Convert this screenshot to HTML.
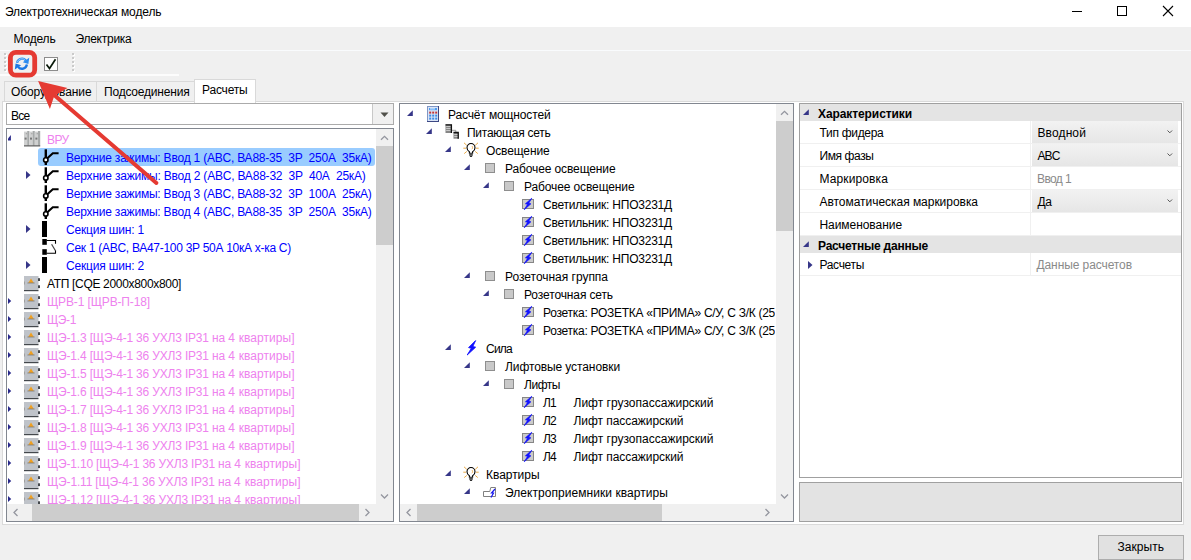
<!DOCTYPE html>
<html lang="ru"><head><meta charset="utf-8"><title>Электротехническая модель</title>
<style>
html,body{margin:0;padding:0;}
body{width:1191px;height:560px;overflow:hidden;background:#f0f0f0;position:relative;font-family:"Liberation Sans", sans-serif;font-size:12px;color:#000;}
.a{position:absolute;}
.t{position:absolute;white-space:pre;line-height:16px;height:16px;}
svg{position:absolute;overflow:visible;}
</style></head><body>
<div class="a" style="left:0px;top:0px;width:1191px;height:27px;background:#ffffff;"></div>
<span class="t" id="t0" style="left:5px;top:4px;color:#000;letter-spacing:-0.104px;">Электротехническая модель</span>
<svg style="left:1060px;top:0" width="131" height="27" viewBox="0 0 131 27"><path d="M12 11.5h10" stroke="#000" stroke-width="1" fill="none"/><rect x="57.5" y="6.5" width="9" height="9" stroke="#000" stroke-width="1" fill="none"/><path d="M103 6l10 10M113 6l-10 10" stroke="#000" stroke-width="1.1" fill="none"/></svg>
<span class="t" id="t1" style="left:13.5px;top:31px;color:#000;letter-spacing:-0.180px;">Модель</span>
<span class="t" id="t2" style="left:75.5px;top:31px;color:#000;letter-spacing:-0.262px;">Электрика</span>
<div class="a" style="left:0px;top:50px;width:1191px;height:1px;background:#f9fbfd;"></div>
<div class="a" style="left:0px;top:74px;width:179px;height:2px;background:#fcfcfc;"></div>
<svg style="left:0;top:0" width="100" height="80"><rect x="5" y="54" width="2" height="2" fill="#fff"/><rect x="4" y="53" width="2" height="2" fill="#cacaca"/><rect x="5" y="58" width="2" height="2" fill="#fff"/><rect x="4" y="57" width="2" height="2" fill="#cacaca"/><rect x="5" y="62" width="2" height="2" fill="#fff"/><rect x="4" y="61" width="2" height="2" fill="#cacaca"/><rect x="5" y="66" width="2" height="2" fill="#fff"/><rect x="4" y="65" width="2" height="2" fill="#cacaca"/><rect x="5" y="70" width="2" height="2" fill="#fff"/><rect x="4" y="69" width="2" height="2" fill="#cacaca"/></svg>
<svg style="left:0;top:0" width="100" height="80"><rect x="73" y="54" width="2" height="2" fill="#fff"/><rect x="72" y="53" width="2" height="2" fill="#cacaca"/><rect x="73" y="58" width="2" height="2" fill="#fff"/><rect x="72" y="57" width="2" height="2" fill="#cacaca"/><rect x="73" y="62" width="2" height="2" fill="#fff"/><rect x="72" y="61" width="2" height="2" fill="#cacaca"/><rect x="73" y="66" width="2" height="2" fill="#fff"/><rect x="72" y="65" width="2" height="2" fill="#cacaca"/><rect x="73" y="70" width="2" height="2" fill="#fff"/><rect x="72" y="69" width="2" height="2" fill="#cacaca"/></svg>
<svg style="left:14px;top:55.500px" width="16" height="16" viewBox="0 0 16 16"><path d="M3.080 6.830A5 5 0 0 1 11.830 4.490" stroke="#2c8cf0" stroke-width="2.300" fill="none"/><path d="M14.400 8L15.200 1.800 8.800 6.200z" fill="#2c8cf0"/><path d="M12.920 8.570A5 5 0 0 1 4.170 10.910" stroke="#1c78e4" stroke-width="2.300" fill="none"/><path d="M1.600 7.400L.800 13.600 7.200 9.200z" fill="#1c78e4"/><path d="M3.300 6.200A5 5 0 0 1 11 3.600" stroke="#a8d8ff" stroke-width=".8" fill="none"/></svg>
<svg style="left:44px;top:57px" width="14" height="14" viewBox="0 0 14 14"><rect x=".5" y=".5" width="13" height="13" fill="#fff" stroke="#8c8c8c"/><path d="M2.500 7.500L5.500 11.500 11.500 2.300" stroke="#0a1a0a" stroke-width="1.700" fill="none"/></svg>
<div class="a" style="left:2px;top:101px;width:1182px;height:424px;background:#ffffff;border:1px solid #dadada;box-sizing:border-box;"></div>
<div class="a" style="left:4px;top:81px;width:93px;height:21px;background:#f0f0f0;border:1px solid #d9d9d9;box-sizing:border-box;"></div>
<div class="a" style="left:96px;top:81px;width:99px;height:21px;background:#f0f0f0;border:1px solid #d9d9d9;box-sizing:border-box;"></div>
<div class="a" style="left:194px;top:79px;width:62px;height:24px;background:#ffffff;border:1px solid #d9d9d9;box-sizing:border-box;border-bottom:none;"></div>
<span class="t" id="t3" style="left:11px;top:84px;color:#000;letter-spacing:-0.094px;">Оборудование</span>
<span class="t" id="t4" style="left:104px;top:84px;color:#000;letter-spacing:-0.200px;">Подсоединения</span>
<span class="t" id="t5" style="left:202px;top:82px;color:#000;letter-spacing:-0.185px;">Расчеты</span>
<div class="a" style="left:6px;top:103px;width:388px;height:22px;background:#ffffff;border:1px solid #ababab;box-sizing:border-box;"></div>
<div class="a" style="left:372px;top:104px;width:20px;height:20px;background:#f0f0f0;border-left:1px solid #c8c8c8;"></div>
<svg style="left:380px;top:111.500px" width="10" height="6"><path d="M.500 .500h8L4.500 5z" fill="#50504a"/></svg>
<span class="t" id="t6" style="left:11px;top:108px;color:#000;letter-spacing:-0.729px;">Все</span>
<div class="a" style="left:6px;top:128px;width:388px;height:394px;background:#ffffff;border:1px solid #828790;box-sizing:border-box;"></div>
<div class="a" style="left:37.5px;top:148px;width:337.5px;height:18px;background:#99ccff;border-radius:3px;"></div>
<svg style="left:23.5px;top:131.2px" width="17" height="16" viewBox="0 0 17 16"><rect x="0.0" y="0.600" width="3.200" height="14" fill="#cfd0d0"/><rect x="3.2" y="0" width="2.200" height="14.600" fill="#a6a9a9"/><rect x="0.6" y="6.600" width="2" height="2" fill="#787878"/><rect x="1.8" y="2" width="1.300" height="1.300" fill="#a8a8a8"/><rect x="5.4" y="0.600" width="3.200" height="14" fill="#cfd0d0"/><rect x="8.6" y="0" width="2.200" height="14.600" fill="#a6a9a9"/><rect x="6.0" y="6.600" width="2" height="2" fill="#787878"/><rect x="7.2" y="2" width="1.300" height="1.300" fill="#a8a8a8"/><rect x="10.8" y="0.600" width="3.200" height="14" fill="#cfd0d0"/><rect x="14.0" y="0" width="2.200" height="14.600" fill="#a6a9a9"/><rect x="11.4" y="6.600" width="2" height="2" fill="#787878"/><rect x="12.6" y="2" width="1.300" height="1.300" fill="#a8a8a8"/><rect x="0" y="14.400" width="16.200" height="1" fill="#3c3c3c"/></svg>
<span class="t" id="t7" style="left:47px;top:132px;color:#ee82ee;letter-spacing:-0.625px;">ВРУ</span>
<svg style="left:8px;top:135px" width="4" height="6"><path d="M2.900 0V5.600H0V3.400z" fill="#28288a"/></svg>
<svg style="left:41px;top:149px" width="18" height="16" viewBox="0 0 18 16"><path d="M4.800 .300V16" stroke="#000" stroke-width="2.400" fill="none"/><path d="M5.800 9.800L11.800 4.300H17.600" stroke="#000" stroke-width="2.100" fill="none"/><circle cx="4.800" cy="10.900" r="2.200" fill="#fff" stroke="#000" stroke-width="1.600"/></svg>
<span class="t" id="t8" style="left:66px;top:150px;color:#0000ff;letter-spacing:-0.212px;">Верхние зажимы: Ввод 1 (ABC, ВА88-35  3P  250А  35кА)</span>
<svg style="left:26px;top:171px" width="5" height="8"><path d="M0 0L4.500 4 0 8z" fill="#363688"/></svg>
<svg style="left:41px;top:167px" width="18" height="16" viewBox="0 0 18 16"><path d="M4.800 .300V16" stroke="#000" stroke-width="2.400" fill="none"/><path d="M5.800 9.800L11.800 4.300H17.600" stroke="#000" stroke-width="2.100" fill="none"/><circle cx="4.800" cy="10.900" r="2.200" fill="#fff" stroke="#000" stroke-width="1.600"/></svg>
<span class="t" id="t9" style="left:66px;top:168px;color:#0000ff;letter-spacing:-0.203px;">Верхние зажимы: Ввод 2 (ABC, ВА88-32  3P  40А  25кА)</span>
<svg style="left:41px;top:185px" width="18" height="16" viewBox="0 0 18 16"><path d="M4.800 .300V16" stroke="#000" stroke-width="2.400" fill="none"/><path d="M5.800 9.800L11.800 4.300H17.600" stroke="#000" stroke-width="2.100" fill="none"/><circle cx="4.800" cy="10.900" r="2.200" fill="#fff" stroke="#000" stroke-width="1.600"/></svg>
<span class="t" id="t10" style="left:66px;top:186px;color:#0000ff;letter-spacing:-0.212px;">Верхние зажимы: Ввод 3 (ABC, ВА88-32  3P  100А  25кА)</span>
<svg style="left:41px;top:203px" width="18" height="16" viewBox="0 0 18 16"><path d="M4.800 .300V16" stroke="#000" stroke-width="2.400" fill="none"/><path d="M5.800 9.800L11.800 4.300H17.600" stroke="#000" stroke-width="2.100" fill="none"/><circle cx="4.800" cy="10.900" r="2.200" fill="#fff" stroke="#000" stroke-width="1.600"/></svg>
<span class="t" id="t11" style="left:66px;top:204px;color:#0000ff;letter-spacing:-0.212px;">Верхние зажимы: Ввод 4 (ABC, ВА88-35  3P  250А  35кА)</span>
<svg style="left:26px;top:225px" width="5" height="8"><path d="M0 0L4.500 4 0 8z" fill="#363688"/></svg>
<div class="a" style="left:42.3px;top:221px;width:4.500px;height:16px;background:#000"></div>
<span class="t" id="t12" style="left:66px;top:222px;color:#0000ff;letter-spacing:-0.177px;">Секция шин: 1</span>
<svg style="left:42px;top:238px" width="16" height="18" viewBox="0 0 16 18"><rect x=".3" y="1" width="4.500" height="5.800" fill="#000"/><rect x=".3" y="11.200" width="4.500" height="5.600" fill="#000"/><path d="M4.500 2.500H13.500V5.800M13.500 12.300V15.300H4.500" stroke="#000" stroke-width="1.100" fill="none"/><path d="M9.600 6.200L13.300 12.500" stroke="#444" stroke-width="1.200" fill="none"/></svg>
<span class="t" id="t13" style="left:66px;top:240px;color:#0000ff;letter-spacing:-0.280px;">Сек 1 (ABC, ВА47-100 3P 50А 10кА х-ка C)</span>
<svg style="left:26px;top:261px" width="5" height="8"><path d="M0 0L4.500 4 0 8z" fill="#363688"/></svg>
<div class="a" style="left:42.3px;top:257px;width:4.500px;height:16px;background:#000"></div>
<span class="t" id="t14" style="left:66px;top:258px;color:#0000ff;letter-spacing:-0.177px;">Секция шин: 2</span>
<svg style="left:23.6px;top:276px" width="17" height="16" viewBox="0 0 17 16"><rect x="0" y="0" width="14.500" height="14" fill="#bfc3c9"/><rect x="0" y="14" width="14.500" height="1.200" fill="#44484c"/><rect x="14" y="2.200" width="2" height="2.800" fill="#44484c"/><rect x="14" y="9.300" width="2" height="2.800" fill="#44484c"/><rect x="0" y="5.500" width="1" height="3" fill="#a0a0a0"/><path d="M4.200 6.900L7 2.500 9.800 6.900z" fill="#f0a020"/><path d="M3.400 7h7.200" stroke="#7a7a7a" stroke-width=".8"/></svg>
<span class="t" id="t15" style="left:47px;top:276px;color:#000;letter-spacing:-0.323px;">АТП [CQE 2000x800x800]</span>
<svg style="left:8px;top:298px" width="4" height="6"><path d="M0 0L3.200 3 0 6z" fill="#28288a"/></svg>
<svg style="left:23.6px;top:294px" width="17" height="16" viewBox="0 0 17 16"><rect x="0" y="0" width="14.500" height="14" fill="#bfc3c9"/><rect x="0" y="14" width="14.500" height="1.200" fill="#44484c"/><rect x="14" y="2.200" width="2" height="2.800" fill="#44484c"/><rect x="14" y="9.300" width="2" height="2.800" fill="#44484c"/><rect x="0" y="5.500" width="1" height="3" fill="#a0a0a0"/><path d="M4.200 6.900L7 2.500 9.800 6.900z" fill="#f0a020"/><path d="M3.400 7h7.200" stroke="#7a7a7a" stroke-width=".8"/></svg>
<span class="t" id="t16" style="left:47px;top:294px;color:#ee82ee;letter-spacing:-0.135px;">ЩРВ-1 [ЩРВ-П-18]</span>
<svg style="left:8px;top:316px" width="4" height="6"><path d="M0 0L3.200 3 0 6z" fill="#28288a"/></svg>
<svg style="left:23.6px;top:312px" width="17" height="16" viewBox="0 0 17 16"><rect x="0" y="0" width="14.500" height="14" fill="#bfc3c9"/><rect x="0" y="14" width="14.500" height="1.200" fill="#44484c"/><rect x="14" y="2.200" width="2" height="2.800" fill="#44484c"/><rect x="14" y="9.300" width="2" height="2.800" fill="#44484c"/><rect x="0" y="5.500" width="1" height="3" fill="#a0a0a0"/><path d="M4.200 6.900L7 2.500 9.800 6.900z" fill="#f0a020"/><path d="M3.400 7h7.200" stroke="#7a7a7a" stroke-width=".8"/></svg>
<span class="t" id="t17" style="left:47px;top:312px;color:#ee82ee;letter-spacing:-0.387px;">ЩЭ-1</span>
<svg style="left:8px;top:334px" width="4" height="6"><path d="M0 0L3.200 3 0 6z" fill="#28288a"/></svg>
<svg style="left:23.6px;top:330px" width="17" height="16" viewBox="0 0 17 16"><rect x="0" y="0" width="14.500" height="14" fill="#bfc3c9"/><rect x="0" y="14" width="14.500" height="1.200" fill="#44484c"/><rect x="14" y="2.200" width="2" height="2.800" fill="#44484c"/><rect x="14" y="9.300" width="2" height="2.800" fill="#44484c"/><rect x="0" y="5.500" width="1" height="3" fill="#a0a0a0"/><path d="M4.200 6.900L7 2.500 9.800 6.900z" fill="#f0a020"/><path d="M3.400 7h7.200" stroke="#7a7a7a" stroke-width=".8"/></svg>
<span class="t" id="t18" style="left:47px;top:330px;color:#ee82ee;letter-spacing:-0.177px;">ЩЭ-1.3 [ЩЭ-4-1 36 УХЛ3 IP31 на 4 </span>
<span class="t" id="t19" style="left:238.8px;top:330px;color:#ee82ee;letter-spacing:0.033px;">квартиры]</span>
<svg style="left:8px;top:352px" width="4" height="6"><path d="M0 0L3.200 3 0 6z" fill="#28288a"/></svg>
<svg style="left:23.6px;top:348px" width="17" height="16" viewBox="0 0 17 16"><rect x="0" y="0" width="14.500" height="14" fill="#bfc3c9"/><rect x="0" y="14" width="14.500" height="1.200" fill="#44484c"/><rect x="14" y="2.200" width="2" height="2.800" fill="#44484c"/><rect x="14" y="9.300" width="2" height="2.800" fill="#44484c"/><rect x="0" y="5.500" width="1" height="3" fill="#a0a0a0"/><path d="M4.200 6.900L7 2.500 9.800 6.900z" fill="#f0a020"/><path d="M3.400 7h7.200" stroke="#7a7a7a" stroke-width=".8"/></svg>
<span class="t" id="t20" style="left:47px;top:348px;color:#ee82ee;letter-spacing:-0.177px;">ЩЭ-1.4 [ЩЭ-4-1 36 УХЛ3 IP31 на 4 </span>
<span class="t" id="t21" style="left:238.8px;top:348px;color:#ee82ee;letter-spacing:0.033px;">квартиры]</span>
<svg style="left:8px;top:370px" width="4" height="6"><path d="M0 0L3.200 3 0 6z" fill="#28288a"/></svg>
<svg style="left:23.6px;top:366px" width="17" height="16" viewBox="0 0 17 16"><rect x="0" y="0" width="14.500" height="14" fill="#bfc3c9"/><rect x="0" y="14" width="14.500" height="1.200" fill="#44484c"/><rect x="14" y="2.200" width="2" height="2.800" fill="#44484c"/><rect x="14" y="9.300" width="2" height="2.800" fill="#44484c"/><rect x="0" y="5.500" width="1" height="3" fill="#a0a0a0"/><path d="M4.200 6.900L7 2.500 9.800 6.900z" fill="#f0a020"/><path d="M3.400 7h7.200" stroke="#7a7a7a" stroke-width=".8"/></svg>
<span class="t" id="t22" style="left:47px;top:366px;color:#ee82ee;letter-spacing:-0.177px;">ЩЭ-1.5 [ЩЭ-4-1 36 УХЛ3 IP31 на 4 </span>
<span class="t" id="t23" style="left:238.8px;top:366px;color:#ee82ee;letter-spacing:0.033px;">квартиры]</span>
<svg style="left:8px;top:388px" width="4" height="6"><path d="M0 0L3.200 3 0 6z" fill="#28288a"/></svg>
<svg style="left:23.6px;top:384px" width="17" height="16" viewBox="0 0 17 16"><rect x="0" y="0" width="14.500" height="14" fill="#bfc3c9"/><rect x="0" y="14" width="14.500" height="1.200" fill="#44484c"/><rect x="14" y="2.200" width="2" height="2.800" fill="#44484c"/><rect x="14" y="9.300" width="2" height="2.800" fill="#44484c"/><rect x="0" y="5.500" width="1" height="3" fill="#a0a0a0"/><path d="M4.200 6.900L7 2.500 9.800 6.900z" fill="#f0a020"/><path d="M3.400 7h7.200" stroke="#7a7a7a" stroke-width=".8"/></svg>
<span class="t" id="t24" style="left:47px;top:384px;color:#ee82ee;letter-spacing:-0.177px;">ЩЭ-1.6 [ЩЭ-4-1 36 УХЛ3 IP31 на 4 </span>
<span class="t" id="t25" style="left:238.8px;top:384px;color:#ee82ee;letter-spacing:0.033px;">квартиры]</span>
<svg style="left:8px;top:406px" width="4" height="6"><path d="M0 0L3.200 3 0 6z" fill="#28288a"/></svg>
<svg style="left:23.6px;top:402px" width="17" height="16" viewBox="0 0 17 16"><rect x="0" y="0" width="14.500" height="14" fill="#bfc3c9"/><rect x="0" y="14" width="14.500" height="1.200" fill="#44484c"/><rect x="14" y="2.200" width="2" height="2.800" fill="#44484c"/><rect x="14" y="9.300" width="2" height="2.800" fill="#44484c"/><rect x="0" y="5.500" width="1" height="3" fill="#a0a0a0"/><path d="M4.200 6.900L7 2.500 9.800 6.900z" fill="#f0a020"/><path d="M3.400 7h7.200" stroke="#7a7a7a" stroke-width=".8"/></svg>
<span class="t" id="t26" style="left:47px;top:402px;color:#ee82ee;letter-spacing:-0.177px;">ЩЭ-1.7 [ЩЭ-4-1 36 УХЛ3 IP31 на 4 </span>
<span class="t" id="t27" style="left:238.8px;top:402px;color:#ee82ee;letter-spacing:0.033px;">квартиры]</span>
<svg style="left:8px;top:424px" width="4" height="6"><path d="M0 0L3.200 3 0 6z" fill="#28288a"/></svg>
<svg style="left:23.6px;top:420px" width="17" height="16" viewBox="0 0 17 16"><rect x="0" y="0" width="14.500" height="14" fill="#bfc3c9"/><rect x="0" y="14" width="14.500" height="1.200" fill="#44484c"/><rect x="14" y="2.200" width="2" height="2.800" fill="#44484c"/><rect x="14" y="9.300" width="2" height="2.800" fill="#44484c"/><rect x="0" y="5.500" width="1" height="3" fill="#a0a0a0"/><path d="M4.200 6.900L7 2.500 9.800 6.900z" fill="#f0a020"/><path d="M3.400 7h7.200" stroke="#7a7a7a" stroke-width=".8"/></svg>
<span class="t" id="t28" style="left:47px;top:420px;color:#ee82ee;letter-spacing:-0.177px;">ЩЭ-1.8 [ЩЭ-4-1 36 УХЛ3 IP31 на 4 </span>
<span class="t" id="t29" style="left:238.8px;top:420px;color:#ee82ee;letter-spacing:0.033px;">квартиры]</span>
<svg style="left:8px;top:442px" width="4" height="6"><path d="M0 0L3.200 3 0 6z" fill="#28288a"/></svg>
<svg style="left:23.6px;top:438px" width="17" height="16" viewBox="0 0 17 16"><rect x="0" y="0" width="14.500" height="14" fill="#bfc3c9"/><rect x="0" y="14" width="14.500" height="1.200" fill="#44484c"/><rect x="14" y="2.200" width="2" height="2.800" fill="#44484c"/><rect x="14" y="9.300" width="2" height="2.800" fill="#44484c"/><rect x="0" y="5.500" width="1" height="3" fill="#a0a0a0"/><path d="M4.200 6.900L7 2.500 9.800 6.900z" fill="#f0a020"/><path d="M3.400 7h7.200" stroke="#7a7a7a" stroke-width=".8"/></svg>
<span class="t" id="t30" style="left:47px;top:438px;color:#ee82ee;letter-spacing:-0.177px;">ЩЭ-1.9 [ЩЭ-4-1 36 УХЛ3 IP31 на 4 </span>
<span class="t" id="t31" style="left:238.8px;top:438px;color:#ee82ee;letter-spacing:0.033px;">квартиры]</span>
<svg style="left:8px;top:460px" width="4" height="6"><path d="M0 0L3.200 3 0 6z" fill="#28288a"/></svg>
<svg style="left:23.6px;top:456px" width="17" height="16" viewBox="0 0 17 16"><rect x="0" y="0" width="14.500" height="14" fill="#bfc3c9"/><rect x="0" y="14" width="14.500" height="1.200" fill="#44484c"/><rect x="14" y="2.200" width="2" height="2.800" fill="#44484c"/><rect x="14" y="9.300" width="2" height="2.800" fill="#44484c"/><rect x="0" y="5.500" width="1" height="3" fill="#a0a0a0"/><path d="M4.200 6.900L7 2.500 9.800 6.900z" fill="#f0a020"/><path d="M3.400 7h7.200" stroke="#7a7a7a" stroke-width=".8"/></svg>
<span class="t" id="t32" style="left:47px;top:456px;color:#ee82ee;letter-spacing:-0.191px;">ЩЭ-1.10 [ЩЭ-4-1 36 УХЛ3 IP31 на 4 </span>
<span class="t" id="t33" style="left:244.8px;top:456px;color:#ee82ee;letter-spacing:0.033px;">квартиры]</span>
<svg style="left:8px;top:478px" width="4" height="6"><path d="M0 0L3.200 3 0 6z" fill="#28288a"/></svg>
<svg style="left:23.6px;top:474px" width="17" height="16" viewBox="0 0 17 16"><rect x="0" y="0" width="14.500" height="14" fill="#bfc3c9"/><rect x="0" y="14" width="14.500" height="1.200" fill="#44484c"/><rect x="14" y="2.200" width="2" height="2.800" fill="#44484c"/><rect x="14" y="9.300" width="2" height="2.800" fill="#44484c"/><rect x="0" y="5.500" width="1" height="3" fill="#a0a0a0"/><path d="M4.200 6.900L7 2.500 9.800 6.900z" fill="#f0a020"/><path d="M3.400 7h7.200" stroke="#7a7a7a" stroke-width=".8"/></svg>
<span class="t" id="t34" style="left:47px;top:474px;color:#ee82ee;letter-spacing:-0.165px;">ЩЭ-1.11 [ЩЭ-4-1 36 УХЛ3 IP31 на 4 </span>
<span class="t" id="t35" style="left:244.8px;top:474px;color:#ee82ee;letter-spacing:0.033px;">квартиры]</span>
<svg style="left:8px;top:496px" width="4" height="6"><path d="M0 0L3.200 3 0 6z" fill="#28288a"/></svg>
<svg style="left:23.6px;top:492px" width="17" height="16" viewBox="0 0 17 16"><rect x="0" y="0" width="14.500" height="14" fill="#bfc3c9"/><rect x="0" y="14" width="14.500" height="1.200" fill="#44484c"/><rect x="14" y="2.200" width="2" height="2.800" fill="#44484c"/><rect x="14" y="9.300" width="2" height="2.800" fill="#44484c"/><rect x="0" y="5.500" width="1" height="3" fill="#a0a0a0"/><path d="M4.200 6.900L7 2.500 9.800 6.900z" fill="#f0a020"/><path d="M3.400 7h7.200" stroke="#7a7a7a" stroke-width=".8"/></svg>
<span class="t" id="t36" style="left:47px;top:492px;color:#ee82ee;letter-spacing:-0.191px;">ЩЭ-1.12 [ЩЭ-4-1 36 УХЛ3 IP31 на 4 </span>
<span class="t" id="t37" style="left:244.8px;top:492px;color:#ee82ee;letter-spacing:0.033px;">квартиры]</span>
<div class="a" style="left:7px;top:504px;width:369px;height:17px;background:#f0f0f0;"></div>
<div class="a" style="left:32px;top:504px;width:327px;height:17px;background:#cdcdcd;"></div>
<svg style="left:7px;top:504px" width="369" height="17"><path d="M10.500 5l-3.500 3.500 3.500 3.500" stroke="#94969f" stroke-width="1.300" fill="none"/><path d="M358.5 5l3.500 3.500-3.500 3.500" stroke="#94969f" stroke-width="1.300" fill="none"/></svg>
<div class="a" style="left:376px;top:129px;width:17px;height:375px;background:#f0f0f0;"></div>
<div class="a" style="left:376px;top:146px;width:17px;height:99px;background:#cdcdcd;"></div>
<svg style="left:376px;top:129px" width="17" height="375"><path d="M5 10.800l3.500-3.500 3.500 3.500" stroke="#94969f" stroke-width="1.300" fill="none"/><path d="M5 365.5l3.500 3.500 3.500-3.500" stroke="#94969f" stroke-width="1.300" fill="none"/></svg>
<div class="a" style="left:376px;top:504px;width:17px;height:17px;background:#f0f0f0;"></div>
<div class="a" style="left:399px;top:103px;width:395px;height:419px;background:#ffffff;border:1px solid #828790;box-sizing:border-box;"></div>
<svg style="left:406.6px;top:109.6px" width="6" height="6"><path d="M5.800 .200V6H0z" fill="#363688"/></svg>
<svg style="left:427px;top:106px" width="13" height="16" viewBox="0 0 13 16"><rect x="0" y="0" width="12" height="16" fill="#3c4884"/><rect x="0" y="0" width="11" height="15" fill="#7f96c6"/><rect x="1" y="1" width="10" height="14" fill="#dbe5f6"/><rect x="2" y="2" width="8" height="2.200" fill="#4f9cf0"/><rect x="3" y="2.400" width="5" height="1" fill="#e8f4ff"/><rect x="2.2" y="5.6" width="2" height="2" fill="#c23838"/><rect x="5.2" y="5.6" width="2" height="2" fill="#c23838"/><rect x="8.2" y="5.6" width="2" height="2" fill="#c23838"/><rect x="2.2" y="8.6" width="2" height="2" fill="#3c8ce4"/><rect x="5.2" y="8.6" width="2" height="2" fill="#3c8ce4"/><rect x="8.2" y="8.6" width="2" height="2" fill="#3c8ce4"/><rect x="2.2" y="11.6" width="2" height="2" fill="#3c8ce4"/><rect x="5.2" y="11.6" width="2" height="2" fill="#3c8ce4"/><rect x="8.2" y="11.6" width="2" height="2" fill="#3c8ce4"/></svg>
<span class="t" id="t38" style="left:448px;top:107px;color:#000;letter-spacing:-0.141px;">Расчёт мощностей</span>
<svg style="left:425.6px;top:127.6px" width="6" height="6"><path d="M5.800 .200V6H0z" fill="#363688"/></svg>
<svg style="left:444.5px;top:124px" width="15" height="16" viewBox="0 0 15 16"><rect x=".5" y=".5" width="6.400" height="8.500" fill="#868686"/><path d="M.500 .800H6.400V9" stroke="#111" stroke-width="1.300" fill="none"/><path d="M1.200 2.500h4.200M1.200 4.500h4.200M1.200 6.500h4.200" stroke="#cfcfcf" stroke-width=".9"/><path d="M7 6.300h3.800V8" stroke="#9a9a9a" stroke-width="1" fill="none"/><rect x="8.500" y="8.200" width="5.200" height="6.500" fill="#868686"/><path d="M8.500 8.500H13.200V14.700" stroke="#111" stroke-width="1.300" fill="none"/><path d="M9.200 10.500h3.200M9.200 12.500h3.200" stroke="#cfcfcf" stroke-width=".9"/></svg>
<span class="t" id="t39" style="left:467px;top:125px;color:#000;letter-spacing:-0.251px;">Питающая сеть</span>
<svg style="left:444.6px;top:145.6px" width="6" height="6"><path d="M5.800 .200V6H0z" fill="#363688"/></svg>
<svg style="left:463px;top:142px" width="16" height="16" viewBox="0 0 16 16"><path d="M1 .800l2.800 2.600M15 .800l-2.800 2.600M.300 6.200h2.700M15.700 6.200h-2.700M1.200 11.600l2.600-2.200M14.800 11.600l-2.600-2.200" stroke="#e8a030" stroke-width=".9" fill="none"/><path d="M6.400 11.200V9.800C5 9 4 7.600 4 5.800 4 3.400 5.700 1.500 8 1.500s4 1.900 4 4.300c0 1.800-1 3.200-2.400 4v1.400z" fill="#fff" stroke="#000" stroke-width="1.100"/><path d="M8.800 4c1 .6 1 2.600 0 3.200" stroke="#e8a030" stroke-width=".8" fill="none"/><rect x="6.200" y="11.200" width="3.600" height="2.600" fill="#505050"/><rect x="6.900" y="13.800" width="2.200" height="1.200" fill="#303030"/></svg>
<span class="t" id="t40" style="left:486px;top:143px;color:#000;letter-spacing:-0.130px;">Освещение</span>
<svg style="left:463.6px;top:163.6px" width="6" height="6"><path d="M5.800 .200V6H0z" fill="#363688"/></svg>
<div class="a" style="left:485px;top:163px;width:10px;height:10px;box-sizing:border-box;background:#c9c9c9;border:1px solid #8e8e8e"></div>
<span class="t" id="t41" style="left:505px;top:161px;color:#000;letter-spacing:-0.118px;">Рабочее освещение</span>
<svg style="left:482.6px;top:181.6px" width="6" height="6"><path d="M5.800 .200V6H0z" fill="#363688"/></svg>
<div class="a" style="left:504px;top:181px;width:10px;height:10px;box-sizing:border-box;background:#c9c9c9;border:1px solid #8e8e8e"></div>
<span class="t" id="t42" style="left:524px;top:179px;color:#000;letter-spacing:-0.118px;">Рабочее освещение</span>
<svg style="left:522px;top:197px" width="13" height="14" viewBox="0 0 13 14"><rect x=".5" y="2.500" width="11" height="9" fill="#cbcbcb" stroke="#868686"/><path d="M9.800 1.200L3.400 6.800 5.600 7.300 2.200 12.800 8.900 6.800 6.700 6.300z" fill="#1010ff" stroke="#1010ff" stroke-width=".7" stroke-linejoin="round"/></svg>
<span class="t" id="t43" style="left:543px;top:197px;color:#000;letter-spacing:-0.217px;">Светильник: НПО3231Д</span>
<svg style="left:522px;top:215px" width="13" height="14" viewBox="0 0 13 14"><rect x=".5" y="2.500" width="11" height="9" fill="#cbcbcb" stroke="#868686"/><path d="M9.800 1.200L3.400 6.800 5.600 7.300 2.200 12.800 8.900 6.800 6.700 6.300z" fill="#1010ff" stroke="#1010ff" stroke-width=".7" stroke-linejoin="round"/></svg>
<span class="t" id="t44" style="left:543px;top:215px;color:#000;letter-spacing:-0.217px;">Светильник: НПО3231Д</span>
<svg style="left:522px;top:233px" width="13" height="14" viewBox="0 0 13 14"><rect x=".5" y="2.500" width="11" height="9" fill="#cbcbcb" stroke="#868686"/><path d="M9.800 1.200L3.400 6.800 5.600 7.300 2.200 12.800 8.900 6.800 6.700 6.300z" fill="#1010ff" stroke="#1010ff" stroke-width=".7" stroke-linejoin="round"/></svg>
<span class="t" id="t45" style="left:543px;top:233px;color:#000;letter-spacing:-0.217px;">Светильник: НПО3231Д</span>
<svg style="left:522px;top:251px" width="13" height="14" viewBox="0 0 13 14"><rect x=".5" y="2.500" width="11" height="9" fill="#cbcbcb" stroke="#868686"/><path d="M9.800 1.200L3.400 6.800 5.600 7.300 2.200 12.800 8.900 6.800 6.700 6.300z" fill="#1010ff" stroke="#1010ff" stroke-width=".7" stroke-linejoin="round"/></svg>
<span class="t" id="t46" style="left:543px;top:251px;color:#000;letter-spacing:-0.217px;">Светильник: НПО3231Д</span>
<svg style="left:463.6px;top:271.6px" width="6" height="6"><path d="M5.800 .200V6H0z" fill="#363688"/></svg>
<div class="a" style="left:485px;top:271px;width:10px;height:10px;box-sizing:border-box;background:#c9c9c9;border:1px solid #8e8e8e"></div>
<span class="t" id="t47" style="left:505px;top:269px;color:#000;letter-spacing:-0.024px;">Розеточная группа</span>
<svg style="left:482.6px;top:289.6px" width="6" height="6"><path d="M5.800 .200V6H0z" fill="#363688"/></svg>
<div class="a" style="left:504px;top:289px;width:10px;height:10px;box-sizing:border-box;background:#c9c9c9;border:1px solid #8e8e8e"></div>
<span class="t" id="t48" style="left:524px;top:287px;color:#000;letter-spacing:-0.123px;">Розеточная сеть</span>
<svg style="left:522px;top:305px" width="13" height="14" viewBox="0 0 13 14"><rect x=".5" y="2.500" width="11" height="9" fill="#cbcbcb" stroke="#868686"/><path d="M9.800 1.200L3.400 6.800 5.600 7.300 2.200 12.800 8.900 6.800 6.700 6.300z" fill="#1010ff" stroke="#1010ff" stroke-width=".7" stroke-linejoin="round"/></svg>
<span class="t" id="t49" style="left:543px;top:305px;color:#000;letter-spacing:-0.280px;width:232px;overflow:hidden;">Розетка: РОЗЕТКА «ПРИМА» С/У, С З/К (25</span>
<svg style="left:522px;top:323px" width="13" height="14" viewBox="0 0 13 14"><rect x=".5" y="2.500" width="11" height="9" fill="#cbcbcb" stroke="#868686"/><path d="M9.800 1.200L3.400 6.800 5.600 7.300 2.200 12.800 8.900 6.800 6.700 6.300z" fill="#1010ff" stroke="#1010ff" stroke-width=".7" stroke-linejoin="round"/></svg>
<span class="t" id="t50" style="left:543px;top:323px;color:#000;letter-spacing:-0.280px;width:232px;overflow:hidden;">Розетка: РОЗЕТКА «ПРИМА» С/У, С З/К (25</span>
<svg style="left:444.6px;top:343.6px" width="6" height="6"><path d="M5.800 .200V6H0z" fill="#363688"/></svg>
<svg style="left:466px;top:340px" width="11" height="16" viewBox="0 0 11 16"><path d="M9.600 .6L2.600 7.600 5.400 8.300 1.200 15 9.600 7.200 6.800 6.500z" fill="#1010ff" stroke="#1010ff" stroke-width=".9" stroke-linejoin="round"/></svg>
<span class="t" id="t51" style="left:486px;top:341px;color:#000;letter-spacing:-0.762px;">Сила</span>
<svg style="left:463.6px;top:361.6px" width="6" height="6"><path d="M5.800 .200V6H0z" fill="#363688"/></svg>
<div class="a" style="left:485px;top:361px;width:10px;height:10px;box-sizing:border-box;background:#c9c9c9;border:1px solid #8e8e8e"></div>
<span class="t" id="t52" style="left:505px;top:359px;color:#000;letter-spacing:-0.098px;">Лифтовые установки</span>
<svg style="left:482.6px;top:379.6px" width="6" height="6"><path d="M5.800 .200V6H0z" fill="#363688"/></svg>
<div class="a" style="left:504px;top:379px;width:10px;height:10px;box-sizing:border-box;background:#c9c9c9;border:1px solid #8e8e8e"></div>
<span class="t" id="t53" style="left:524px;top:377px;color:#000;letter-spacing:-0.463px;">Лифты</span>
<svg style="left:522px;top:395px" width="13" height="14" viewBox="0 0 13 14"><rect x=".5" y="2.500" width="11" height="9" fill="#cbcbcb" stroke="#868686"/><path d="M9.800 1.200L3.400 6.800 5.600 7.300 2.200 12.800 8.900 6.800 6.700 6.300z" fill="#1010ff" stroke="#1010ff" stroke-width=".7" stroke-linejoin="round"/></svg>
<span class="t" id="t54" style="left:543px;top:395px;color:#000;letter-spacing:-0.781px;">Л1</span>
<span class="t" id="t55" style="left:573.5px;top:395px;color:#000;letter-spacing:0.005px;">Лифт грузопассажирский</span>
<svg style="left:522px;top:413px" width="13" height="14" viewBox="0 0 13 14"><rect x=".5" y="2.500" width="11" height="9" fill="#cbcbcb" stroke="#868686"/><path d="M9.800 1.200L3.400 6.800 5.600 7.300 2.200 12.800 8.900 6.800 6.700 6.300z" fill="#1010ff" stroke="#1010ff" stroke-width=".7" stroke-linejoin="round"/></svg>
<span class="t" id="t56" style="left:543px;top:413px;color:#000;letter-spacing:-0.781px;">Л2</span>
<span class="t" id="t57" style="left:573.5px;top:413px;color:#000;letter-spacing:-0.055px;">Лифт пассажирский</span>
<svg style="left:522px;top:431px" width="13" height="14" viewBox="0 0 13 14"><rect x=".5" y="2.500" width="11" height="9" fill="#cbcbcb" stroke="#868686"/><path d="M9.800 1.200L3.400 6.800 5.600 7.300 2.200 12.800 8.900 6.800 6.700 6.300z" fill="#1010ff" stroke="#1010ff" stroke-width=".7" stroke-linejoin="round"/></svg>
<span class="t" id="t58" style="left:543px;top:431px;color:#000;letter-spacing:-0.781px;">Л3</span>
<span class="t" id="t59" style="left:573.5px;top:431px;color:#000;letter-spacing:0.005px;">Лифт грузопассажирский</span>
<svg style="left:522px;top:449px" width="13" height="14" viewBox="0 0 13 14"><rect x=".5" y="2.500" width="11" height="9" fill="#cbcbcb" stroke="#868686"/><path d="M9.800 1.200L3.400 6.800 5.600 7.300 2.200 12.800 8.900 6.800 6.700 6.300z" fill="#1010ff" stroke="#1010ff" stroke-width=".7" stroke-linejoin="round"/></svg>
<span class="t" id="t60" style="left:543px;top:449px;color:#000;letter-spacing:-0.781px;">Л4</span>
<span class="t" id="t61" style="left:573.5px;top:449px;color:#000;letter-spacing:-0.055px;">Лифт пассажирский</span>
<svg style="left:444.6px;top:469.6px" width="6" height="6"><path d="M5.800 .200V6H0z" fill="#363688"/></svg>
<svg style="left:463px;top:466px" width="16" height="16" viewBox="0 0 16 16"><path d="M1 .800l2.800 2.600M15 .800l-2.800 2.600M.300 6.200h2.700M15.700 6.200h-2.700M1.200 11.600l2.600-2.200M14.800 11.600l-2.600-2.200" stroke="#e8a030" stroke-width=".9" fill="none"/><path d="M6.400 11.200V9.800C5 9 4 7.600 4 5.800 4 3.400 5.700 1.500 8 1.500s4 1.900 4 4.300c0 1.800-1 3.200-2.400 4v1.400z" fill="#fff" stroke="#000" stroke-width="1.100"/><path d="M8.800 4c1 .6 1 2.600 0 3.200" stroke="#e8a030" stroke-width=".8" fill="none"/><rect x="6.200" y="11.200" width="3.600" height="2.600" fill="#505050"/><rect x="6.900" y="13.800" width="2.200" height="1.200" fill="#303030"/></svg>
<span class="t" id="t62" style="left:486px;top:467px;color:#000;letter-spacing:-0.039px;">Квартиры</span>
<svg style="left:463.6px;top:487.6px" width="6" height="6"><path d="M5.800 .200V6H0z" fill="#363688"/></svg>
<svg style="left:483px;top:486px" width="14" height="12" viewBox="0 0 14 12"><path d="M.500 5.500H6.800L7.800 1.500H12.500V10.500H.500z" fill="#fff" stroke="#808080" stroke-width="1"/><path d="M12 3L8.500 7H10.500L8 11.500" stroke="#1616f0" stroke-width="1.200" fill="none"/></svg>
<span class="t" id="t63" style="left:505px;top:485px;color:#000;letter-spacing:0.055px;">Электроприемники квартиры</span>
<div class="a" style="left:400px;top:504px;width:376px;height:17px;background:#f0f0f0;"></div>
<div class="a" style="left:417px;top:504px;width:245px;height:17px;background:#cdcdcd;"></div>
<svg style="left:400px;top:504px" width="376" height="17"><path d="M10.500 5l-3.500 3.500 3.500 3.500" stroke="#94969f" stroke-width="1.300" fill="none"/><path d="M365.5 5l3.500 3.500-3.500 3.500" stroke="#94969f" stroke-width="1.300" fill="none"/></svg>
<div class="a" style="left:776px;top:104px;width:17px;height:400px;background:#f0f0f0;"></div>
<div class="a" style="left:776px;top:121px;width:17px;height:110px;background:#cdcdcd;"></div>
<svg style="left:776px;top:104px" width="17" height="400"><path d="M5 10.800l3.500-3.500 3.500 3.500" stroke="#94969f" stroke-width="1.300" fill="none"/><path d="M5 390.5l3.500 3.500 3.500-3.500" stroke="#94969f" stroke-width="1.300" fill="none"/></svg>
<div class="a" style="left:776px;top:504px;width:17px;height:17px;background:#f0f0f0;"></div>
<div class="a" style="left:799px;top:103px;width:383px;height:375px;background:#ffffff;border:1px solid #a0a0a0;box-sizing:border-box;"></div>
<div class="a" style="left:800px;top:104px;width:381px;height:17px;background:#e4e4e4;"></div>
<div class="a" style="left:800px;top:236px;width:381px;height:17px;background:#e4e4e4;"></div>
<div class="a" style="left:800px;top:143px;width:381px;height:1px;background:#f0f0f0;"></div>
<div class="a" style="left:800px;top:166px;width:381px;height:1px;background:#f0f0f0;"></div>
<div class="a" style="left:800px;top:189px;width:381px;height:1px;background:#f0f0f0;"></div>
<div class="a" style="left:800px;top:212px;width:381px;height:1px;background:#f0f0f0;"></div>
<div class="a" style="left:800px;top:235px;width:381px;height:1px;background:#f0f0f0;"></div>
<div class="a" style="left:800px;top:275px;width:381px;height:1px;background:#f0f0f0;"></div>
<div class="a" style="left:1030px;top:121px;width:1px;height:115px;background:#f0f0f0;"></div>
<div class="a" style="left:1030px;top:253px;width:1px;height:23px;background:#f0f0f0;"></div>
<div class="a" style="left:1032px;top:121px;width:146px;height:22px;background:linear-gradient(#f2f2f2,#e6e6e6);"></div>
<svg style="left:1166.500px;top:129.5px" width="7" height="5"><path d="M.500 .500L2.800 2.800 5.100 .500" stroke="#555" stroke-width="1" fill="none"/></svg>
<div class="a" style="left:1032px;top:144px;width:146px;height:22px;background:linear-gradient(#f2f2f2,#e6e6e6);"></div>
<svg style="left:1166.500px;top:152.5px" width="7" height="5"><path d="M.500 .500L2.800 2.800 5.100 .500" stroke="#555" stroke-width="1" fill="none"/></svg>
<div class="a" style="left:1032px;top:190px;width:146px;height:22px;background:linear-gradient(#f2f2f2,#e6e6e6);"></div>
<svg style="left:1166.500px;top:198.5px" width="7" height="5"><path d="M.500 .500L2.800 2.800 5.100 .500" stroke="#555" stroke-width="1" fill="none"/></svg>
<svg style="left:803px;top:108.6px" width="6" height="6"><path d="M5.800 .200V6H0z" fill="#363688"/></svg>
<span class="t" id="t64" style="left:818px;top:106px;color:#000;font-weight:bold;letter-spacing:-0.090px;">Характеристики</span>
<svg style="left:803px;top:240.6px" width="6" height="6"><path d="M5.800 .200V6H0z" fill="#363688"/></svg>
<span class="t" id="t65" style="left:818px;top:238px;color:#000;font-weight:bold;letter-spacing:-0.217px;">Расчетные данные</span>
<svg style="left:808px;top:260.5px" width="5" height="8"><path d="M0 0L4.500 4 0 8z" fill="#363688"/></svg>
<span class="t" id="t66" style="left:819.5px;top:124.5px;color:#000;letter-spacing:-0.294px;">Тип фидера</span>
<span class="t" id="t67" style="left:819.5px;top:147.5px;color:#000;letter-spacing:-0.406px;">Имя фазы</span>
<span class="t" id="t68" style="left:819.5px;top:170.5px;color:#000;letter-spacing:0.116px;">Маркировка</span>
<span class="t" id="t69" style="left:819.5px;top:193.5px;color:#000;letter-spacing:-0.037px;">Автоматическая маркировка</span>
<span class="t" id="t70" style="left:819.5px;top:216.5px;color:#000;letter-spacing:-0.057px;">Наименование</span>
<span class="t" id="t71" style="left:819.5px;top:256.5px;color:#000;letter-spacing:-0.328px;">Расчеты</span>
<span class="t" id="t72" style="left:1037.5px;top:124.5px;color:#000;letter-spacing:0.118px;">Вводной</span>
<span class="t" id="t73" style="left:1037.5px;top:147.5px;color:#000;letter-spacing:-0.896px;">ABC</span>
<span class="t" id="t74" style="left:1037px;top:170.5px;color:#8a8a8a;letter-spacing:-0.612px;">Ввод 1</span>
<span class="t" id="t75" style="left:1037.5px;top:193.5px;color:#000;letter-spacing:-0.406px;">Да</span>
<span class="t" id="t76" style="left:1036.5px;top:256.5px;color:#8a8a8a;letter-spacing:-0.090px;">Данные расчетов</span>
<div class="a" style="left:799px;top:482px;width:383px;height:40px;background:#e3e3e3;border:1px solid #a0a0a0;box-sizing:border-box;"></div>
<div class="a" style="left:1098px;top:535px;width:86px;height:25px;background:#e1e1e1;border:1px solid #adadad;box-sizing:border-box;"></div>
<span class="t" id="t77" style="left:1117.5px;top:539px;color:#000;letter-spacing:0.040px;">Закрыть</span>
<svg style="left:0;top:0" width="400" height="200" viewBox="0 0 400 200"><rect x="10.400" y="52.300" width="24.300" height="22.900" rx="5.500" fill="none" stroke="#e53a32" stroke-width="4.800"/><path d="M156.400 183L53 93.900" stroke="#e53a32" stroke-width="4" stroke-linecap="round" fill="none"/><path d="M38.100 81.100L67.500 87.900 56.500 94.500 53.700 97.500 49.900 108.900z" fill="#e53a32"/></svg>
</body></html>
